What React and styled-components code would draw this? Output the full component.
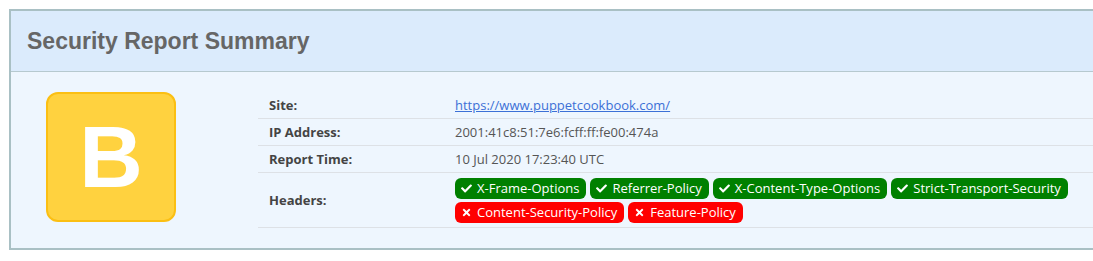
import React from "react";
import styled, { createGlobalStyle } from "styled-components";
import { FaCheck, FaTimes } from "react-icons/fa";

const GlobalStyle = createGlobalStyle`
  body {
    margin: 0;
    padding: 9px 0 0 9px;
    overflow: hidden;
    background: #fff;
    font-family: "Open Sans", "Noto Sans", sans-serif;
  }
`;

const Panel = styled.section`
  width: 1160px;
  border: 2px solid #a9c0c4;
  background: #eef6fe;
`;

const PanelHeader = styled.header`
  height: 60px;
  display: flex;
  align-items: center;
  padding-left: 16px;
  background: #dbebfc;
  border-bottom: 1px solid #b6c9cf;
`;

const Title = styled.h1`
  margin: 0;
  font-family: "Liberation Sans", Arial, sans-serif;
  font-size: 23px;
  font-weight: 700;
  color: #666;
`;

const PanelBody = styled.div`
  display: flex;
  align-items: flex-start;
  padding: 19px 0 20px 35px;
`;

const Grade = styled.div`
  flex: none;
  width: 126px;
  height: 126px;
  margin-top: 1px;
  display: flex;
  align-items: center;
  justify-content: center;
  background: #ffd23f;
  border: 2px solid #fbbf13;
  border-radius: 12px;
  color: #fff;
  font-family: "Liberation Sans", Arial, sans-serif;
  font-weight: 700;
  font-size: 88px;
  line-height: 1;
`;

const Table = styled.table`
  margin: 1px 0 0 82px;
  flex: 1;
  border-collapse: collapse;
  font-size: 13px;
`;

const Row = styled.tr`
  border-bottom: 1px solid #dde1e6;
`;

const Label = styled.th`
  width: 176px;
  padding: 0 10px 0 11px;
  height: ${(p) => (p.tall ? "54px" : "26px")};
  text-align: left;
  font-weight: 700;
  color: #444;
`;

const Value = styled.td`
  padding: 0;
  color: #555;
`;

const Link = styled.a`
  color: #3c70d6;
  text-decoration: underline;
`;

const Badges = styled.div`
  display: flex;
  flex-wrap: wrap;
  gap: 3px 4px;
  padding: 1px 0;
`;

const Badge = styled.span`
  display: inline-flex;
  align-items: center;
  gap: 5px;
  height: 21px;
  padding: 0 7px 0 6px;
  border-radius: 6px;
  color: #fff;
  background: ${(p) => (p.ok ? "#008000" : "#ff0000")};
  svg {
    font-size: 11px;
  }
`;

const passed = [
  "X-Frame-Options",
  "Referrer-Policy",
  "X-Content-Type-Options",
  "Strict-Transport-Security",
];
const missing = ["Content-Security-Policy", "Feature-Policy"];

export default function App() {
  return (
    <>
      <GlobalStyle />
      <Panel>
        <PanelHeader>
          <Title>Security Report Summary</Title>
        </PanelHeader>
        <PanelBody>
          <Grade>B</Grade>
          <Table>
            <tbody>
              <Row>
                <Label>Site:</Label>
                <Value>
                  <Link href="#">https://www.puppetcookbook.com/</Link>
                </Value>
              </Row>
              <Row>
                <Label>IP Address:</Label>
                <Value>2001:41c8:51:7e6:fcff:ff:fe00:474a</Value>
              </Row>
              <Row>
                <Label>Report Time:</Label>
                <Value>10 Jul 2020 17:23:40 UTC</Value>
              </Row>
              <Row>
                <Label tall>Headers:</Label>
                <Value>
                  <Badges>
                    {passed.map((h) => (
                      <Badge ok key={h}>
                        <FaCheck />
                        {h}
                      </Badge>
                    ))}
                    {missing.map((h) => (
                      <Badge key={h}>
                        <FaTimes />
                        {h}
                      </Badge>
                    ))}
                  </Badges>
                </Value>
              </Row>
            </tbody>
          </Table>
        </PanelBody>
      </Panel>
    </>
  );
}
